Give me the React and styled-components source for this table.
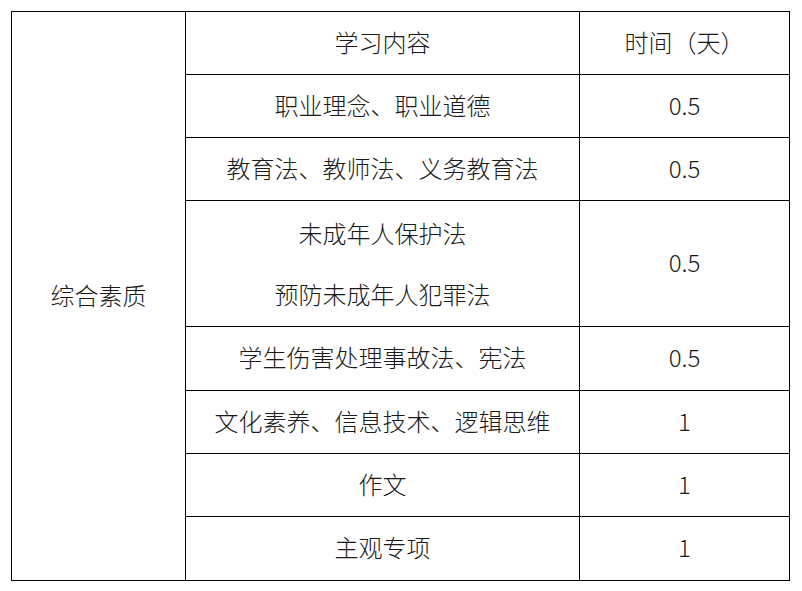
import styled, { createGlobalStyle } from "styled-components";

const GlobalStyle = createGlobalStyle`
    html, body {
        margin: 0;
        padding: 0;
        background: #ffffff;
    }
`;

const Page = styled.div`
    padding: 11px 0 0 11px;
    font-family: "Noto Sans CJK SC", "Noto Sans", sans-serif;
    color: #1a1a1a;
`;

const Table = styled.table`
    border-collapse: collapse;
    table-layout: fixed;
    width: 778px;
    font-size: 24px;
    font-weight: 300;
`;

const Cell = styled.td`
    border: 1px solid #000;
    padding: 0 0 2px;
    height: ${(p) => p.$h || 60}px;
    text-align: center;
    vertical-align: middle;
    line-height: 1.2;
`;

const Line = styled.div`
    line-height: 61px;
`;

const rows = [
    { topic: ["职业理念、职业道德"], days: "0.5", h: 60 },
    { topic: ["教育法、教师法、义务教育法"], days: "0.5", h: 60 },
    { topic: ["未成年人保护法", "预防未成年人犯罪法"], days: "0.5", h: 123 },
    { topic: ["学生伤害处理事故法、宪法"], days: "0.5", h: 61 },
    { topic: ["文化素养、信息技术、逻辑思维"], days: "1", h: 60 },
    { topic: ["作文"], days: "1", h: 60 },
    { topic: ["主观专项"], days: "1", h: 61 },
];

export default function App() {
    return (
        <Page>
            <GlobalStyle />
            <Table>
                <colgroup>
                    <col style={{ width: 174 }} />
                    <col style={{ width: 394 }} />
                    <col style={{ width: 210 }} />
                </colgroup>
                <tbody>
                    <tr>
                        <Cell rowSpan={8}>综合素质</Cell>
                        <Cell>学习内容</Cell>
                        <Cell>时间（天）</Cell>
                    </tr>
                    {rows.map((r, i) => (
                        <tr key={i}>
                            <Cell $h={r.h}>
                                {r.topic.length > 1
                                    ? r.topic.map((t) => <Line key={t}>{t}</Line>)
                                    : r.topic[0]}
                            </Cell>
                            <Cell $h={r.h}>{r.days}</Cell>
                        </tr>
                    ))}
                </tbody>
            </Table>
        </Page>
    );
}
